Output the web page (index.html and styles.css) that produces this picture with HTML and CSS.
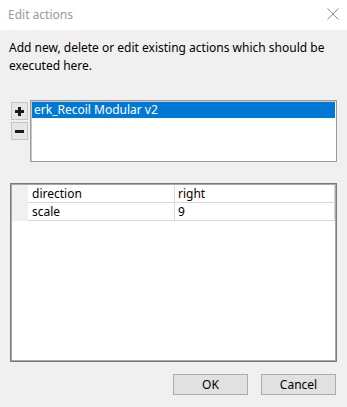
FILE: index.html
```
<!DOCTYPE html>
<html lang="en">
<head>
    <meta charset="UTF-8">
    <title>Edit actions</title>
    <link rel="stylesheet" href="styles.css">
</head>
<body>
    <div class="dialog">
        <div class="titleBar">
            <span class="titleText">Edit actions</span>
            <svg class="closeIcon" viewBox="0 0 12 12" width="12" height="12">
                <path d="M0.5 0.5 L11.5 11.5 M11.5 0.5 L0.5 11.5" stroke="#8a8a8a" stroke-width="1" fill="none" />
            </svg>
        </div>

        <div class="dialogBody">
            <p class="intro">Add new, delete or edit existing actions which should be executed here.</p>

            <!-- action list -->
            <div class="actionsRow">
                <div class="sideButtons">
                    <button class="iconButton">
                        <svg viewBox="0 0 9 9" width="9" height="9"><path d="M3 0 H6 V3 H9 V6 H6 V9 H3 V6 H0 V3 H3 Z" fill="#1a1a1a" /></svg>
                    </button>
                    <button class="iconButton">
                        <svg viewBox="0 0 9 9" width="9" height="9"><rect x="0" y="3" width="9" height="3" fill="#1a1a1a" /></svg>
                    </button>
                </div>
                <div class="actionList">
                    <div class="actionItem selected">erk_Recoil Modular v2</div>
                </div>
            </div>

            <!-- parameter grid -->
            <div class="paramGrid">
                <div class="paramRow">
                    <div class="rowHeader"></div>
                    <div class="cell">direction</div>
                    <div class="cell">right</div>
                </div>
                <div class="paramRow">
                    <div class="rowHeader"></div>
                    <div class="cell">scale</div>
                    <div class="cell">9</div>
                </div>
            </div>

            <div class="footer">
                <button class="dialogButton">OK</button>
                <button class="dialogButton">Cancel</button>
            </div>
        </div>
    </div>
</body>
</html>
```

FILE: styles.css
```
* {
    box-sizing: border-box;
    font-family: 'Noto Sans', 'Open Sans', sans-serif;
    font-size: 12px;
}

body {
    margin: 0;
    width: 347px;
    height: 407px;
    overflow: hidden;
}

.dialog {
    display: flex;
    flex-direction: column;
    height: 407px;
}

.titleBar {
    height: 30px;
    background-color: #fff;
    display: flex;
    align-items: center;
    justify-content: space-between;
    padding: 0 8px 2px 8px;
}

.titleText {
    color: #9a9a9a;
}

.dialogBody {
    flex: 1;
    background-color: #f0f0f0;
    padding: 9px 10px 0 10px;
    display: flex;
    flex-direction: column;
}

.intro {
    margin: 0 0 0 -1px;
    line-height: 18px;
    color: #000;
}

.actionsRow {
    display: flex;
    margin-top: 25px;
    height: 62px;
}

.sideButtons {
    display: flex;
    flex-direction: column;
    gap: 2px;
    margin: 2px 2px 0 1px;
}

.iconButton {
    width: 17px;
    height: 18px;
    padding: 0;
    border: 1px solid #c4c4c4;
    background-color: #e6e6e6;
    display: flex;
    align-items: center;
    justify-content: center;
}

.actionList {
    flex: 1;
    background-color: #fff;
    border: 1px solid #9c9c9c;
    box-shadow: inset 1px 1px 0 #c8c8c8;
    padding: 1px;
}

.actionItem {
    height: 16px;
    line-height: 15px;
    padding-left: 2px;
}

.actionItem.selected {
    background-color: #0078d7;
    color: #fff;
}

.paramGrid {
    margin-top: 21px;
    height: 179px;
    background-color: #fff;
    border: 1px solid #7a7a7a;
    box-shadow: inset 1px 1px 0 #a8a8a8, inset -1px -1px 0 #a8a8a8;
    padding: 1px;
}

.paramRow {
    display: flex;
    height: 18px;
}

.rowHeader {
    width: 16px;
    background-color: #f0f0f0;
    border-bottom: 1px solid #f0f0f0;
}

.cell {
    line-height: 17px;
    padding-left: 4px;
    border-right: 1px solid #d8d8d8;
    border-bottom: 1px solid #d8d8d8;
    color: #000;
}

.cell:nth-child(2) {
    width: 147px;
}

.cell:nth-child(3) {
    flex: 1;
    padding-left: 3px;
}

.footer {
    display: flex;
    justify-content: flex-end;
    gap: 13px;
    margin-top: 12px;
    padding-right: 1px;
}

.dialogButton {
    width: 75px;
    height: 21px;
    padding: 0;
    background-color: #e1e1e1;
    border: 1px solid #adadad;
    color: #000;
}
```
